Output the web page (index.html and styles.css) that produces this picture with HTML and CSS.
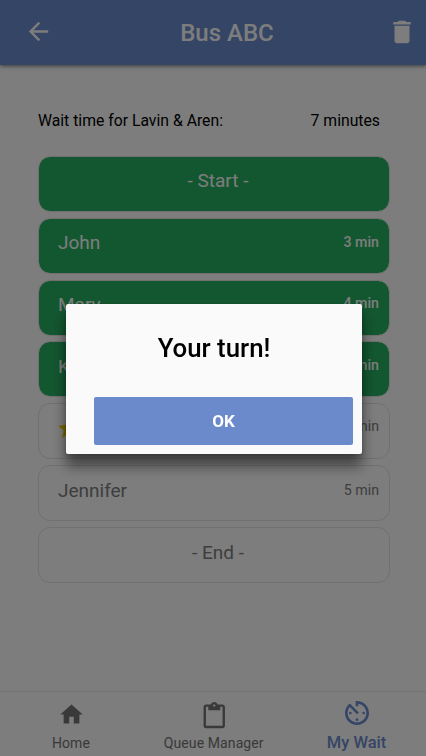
FILE: index.html
```html
<!DOCTYPE html>
<html lang="en">
<head>
<meta charset="utf-8">
<title>Bus ABC</title>
<link rel="stylesheet" href="styles.css">
</head>
<body>
<div class="app">
  <header class="header">
    <svg class="back" viewBox="0 0 24 24"><path d="M20 11H7.83l5.59-5.59L12 4l-8 8 8 8 1.41-1.41L7.83 13H20v-2z"/></svg>
    <h1 class="title">Bus ABC</h1>
    <svg class="trash" viewBox="0 0 24 24"><path d="M6 19c0 1.1.9 2 2 2h8c1.1 0 2-.9 2-2V7H6v12zM19 4h-3.5l-1-1h-5l-1 1H5v2h14V4z"/></svg>
  </header>
  <main class="content">
    <div class="wait"><span>Wait time for Lavin &amp; Aren:</span><span>7 minutes</span></div>
    <div class="queue">
      <div class="card done center"><span class="name">- Start -</span></div>
      <div class="card done"><span class="name">John</span><span class="min">3 min</span></div>
      <div class="card done"><span class="name">Mary</span><span class="min">4 min</span></div>
      <div class="card done"><span class="name">K</span><span class="min">4 min</span></div>
      <div class="card current"><svg class="star" viewBox="0 0 24 24"><path d="M12 17.27L18.18 21l-1.64-7.03L22 9.24l-7.19-.61L12 2 9.19 8.63 2 9.24l5.46 4.73L5.82 21z"/></svg><span class="min">4 min</span></div>
      <div class="card"><span class="name">Jennifer</span><span class="min">5 min</span></div>
      <div class="card center"><span class="name">- End -</span></div>
    </div>
  </main>
  <nav class="tabs">
    <div class="tab">
      <svg class="home" viewBox="0 0 24 24"><path d="M10 20v-6h4v6h5v-8h3L12 3 2 12h3v8z"/></svg>
      <span>Home</span>
    </div>
    <div class="tab queue-tab">
      <svg class="clip" viewBox="0 0 24 24"><path d="M19 2h-4.18C14.4.84 13.3 0 12 0c-1.3 0-2.4.84-2.82 2H5c-1.1 0-2 .9-2 2v16c0 1.1.9 2 2 2h14c1.1 0 2-.9 2-2V4c0-1.1-.9-2-2-2zm-7 0c.55 0 1 .45 1 1s-.45 1-1 1-1-.45-1-1 .45-1 1-1zm7 18H5V4h2v3h10V4h2v16z"/></svg>
      <span>Queue Manager</span>
    </div>
    <div class="tab active">
      <svg class="timer" viewBox="0 0 24 24"><path d="M11 17c0 .55.45 1 1 1s1-.45 1-1-.45-1-1-1-1 .45-1 1zm0-14v4h2V5.08c3.39.49 6 3.39 6 6.92 0 3.87-3.13 7-7 7s-7-3.13-7-7c0-1.68.59-3.22 1.58-4.42L12 13l1.41-1.41-6.8-6.8v.02C4.42 6.45 3 9.05 3 12c0 4.97 4.02 9 9 9 4.97 0 9-4.03 9-9s-4.03-9-9-9h-1zm7 9c0-.55-.45-1-1-1s-1 .45-1 1 .45 1 1 1 1-.45 1-1zM6 12c0 .55.45 1 1 1s1-.45 1-1-.45-1-1-1-1 .45-1 1z"/></svg>
      <span>My Wait</span>
    </div>
  </nav>
</div>
<div class="overlay">
  <div class="dialog">
    <h2 class="message">Your turn!</h2>
    <button class="ok">OK</button>
  </div>
</div>
</body>
</html>
```
FILE: styles.css
```css
* { box-sizing: border-box; }
body { margin: 0; font-family: Roboto, sans-serif; background: #fafafa; }
svg { fill: currentColor; display: block; }
.app { height: 756px; display: flex; flex-direction: column; overflow: hidden; }
.header {
  height: 65px; flex: none; display: grid; grid-template-columns: 52px 1fr 52px;
  align-items: center; background: #6b8acb; color: #fafafa;
  box-shadow: 0 1px 4px rgba(0,0,0,.55);
}
.back { width: 29px; height: 29px; margin: -2px 0 0 24px; }
.title { margin: 0; font-size: 24px; font-weight: 500; text-align: center; line-height: 28px; padding-left: 28px; }
.trash { width: 30px; height: 30px; margin: -1px 0 0 13px; }
.content { flex: 1; padding: 46px 36px 0 38px; }
.wait { display: flex; justify-content: space-between; padding-right: 10px; font-size: 15.75px; line-height: 19px; color: #000; }
.queue { display: flex; flex-direction: column; gap: 5.85px; margin-top: 25.9px; width: 351.5px; }
.card {
  height: 56px; flex: none; display: flex; justify-content: space-between; align-items: flex-start;
  padding: 14px 9.5px 0 19px; border: 1px solid #e0e0e0; border-radius: 12px; color: #7c7c7c;
}
.done { background: #27ae60; background-clip: padding-box; color: #fafafa; padding-top: 13.3px; }
.center { justify-content: center; padding-left: 18px; }
.name { font-size: 19px; line-height: 22px; }
.min { font-size: 14.2px; line-height: 18px; padding-top: 1px; }
.done .min { font-weight: 500; padding-top: .5px; }
.current { padding-top: 12px; }
.star { width: 25px; height: 25px; fill: #f0d000; margin: 0 0 0 -2px; }
.tabs { height: 65px; flex: none; display: grid; grid-template-columns: repeat(3, 1fr); border-top: 1px solid #e9e9e9; }
.tab { display: flex; flex-direction: column; align-items: center; color: #737373; font-size: 14px; letter-spacing: .1px; }
.tab span { line-height: 18px; margin-top: auto; margin-bottom: 4px; }
.home { width: 27px; height: 27px; margin: 9px 0 0 1px; }
.queue-tab { padding-left: 1.5px; }
.clip { width: 28.5px; height: 28.5px; margin-top: 9.5px; }
.timer { width: 32px; height: 32px; margin-top: 5px; }
.active { color: #6b8acb; font-size: 16.5px; font-weight: 500; letter-spacing: 0; padding-left: 3px; }
.overlay { position: fixed; inset: 0; background: rgba(0,0,0,.5); display: flex; justify-content: center; align-items: flex-start; padding-top: 304px; }
.dialog {
  width: 296px; height: 150px; margin-left: 2px; padding: 29px 9px 9.5px 28px; background: #fafafa;
  border-radius: 2px; box-shadow: 0 12px 14px rgba(0,0,0,.48), 0 2px 5px rgba(0,0,0,.2);
  display: flex; flex-direction: column; justify-content: space-between;
}
.message { margin: 0 19px 0 0; font-size: 25.8px; line-height: 30px; font-weight: 500; text-align: center; color: #000; }
.ok { height: 47.5px; width: 259px; padding: 0; border: 0; border-radius: 2px; background: #6b8acb; color: #fff; font: 700 17px/20px Roboto, sans-serif; }
```
